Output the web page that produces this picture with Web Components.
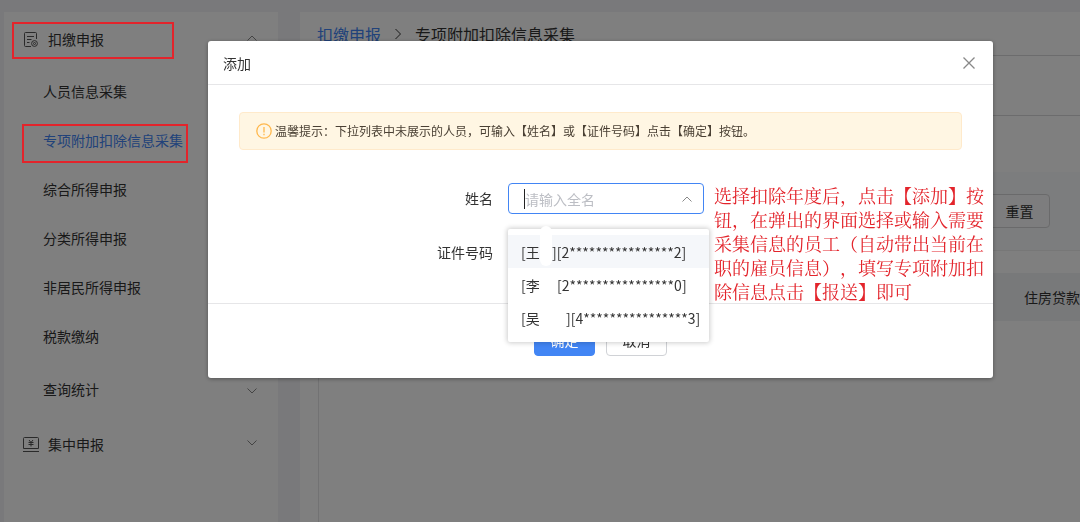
<!DOCTYPE html>
<html lang="zh-CN">
<head>
<meta charset="utf-8">
<title>专项附加扣除信息采集</title>
<style>
html,body{margin:0;height:100%}
body{font-family:"Noto Sans CJK SC",sans-serif;font-size:14px;line-height:20px;color:#333;background:#f3f3f7;overflow:hidden;
--blue:#4285f4;--line:#e6e6e8;--red:#e3242b}
</style>
</head>
<body>
<tax-app></tax-app>
<script>
const define=(name,html,setup)=>customElements.define(name,class extends HTMLElement{
  connectedCallback(){
    if(this.shadowRoot)return;
    this.attachShadow({mode:"open"}).innerHTML=html;
    if(setup)setup(this,this.shadowRoot);
  }
});

define("line-icon",`<style>:host{display:inline-flex;flex:none}svg{display:block;fill:none;stroke:currentColor}</style><svg aria-hidden="true"></svg>`,(el,root)=>{
  const icons={
    report:[16,17,'<path d="M8 15.500H2.500Q1.500 15.500 1.500 14.500V2.500Q1.500 1.500 2.500 1.500H12.500Q13.500 1.500 13.500 2.500V8M4 5.500H11M4 8.500H8.500M4 11.500H6.500"/><circle cx="11.500" cy="12.500" r="2.900"/><circle cx="11.500" cy="12.500" r="1"/>'],
    money:[18,17,'<path d="M2.500 1.500H15.500Q16.500 1.500 16.500 2.500V12.500H1.500V2.500Q1.500 1.500 2.500 1.500ZM1 15.500H17M7 4L9 6.500L11 4M6.500 6.500H11.500M6.500 8.500H11.500M9 6.500V10.500"/>'],
    up:[12,8,'<path d="M1.500 6.500L6 2L10.500 6.500"/>'],
    down:[12,8,'<path d="M1.500 1.500L6 6L10.500 1.500"/>'],
    right:[8,12,'<path d="M1.500 1L6.500 6L1.500 11"/>'],
    close:[14,14,'<path stroke-width="1.300" d="M1.500 1.500L12.500 12.500M12.500 1.500L1.500 12.500"/>'],
    warn:[16,16,'<circle cx="8" cy="8" r="7.200" stroke-width="1.300"/><path stroke-width="1.300" d="M8 4V9.500M8 10.800V12.200"/>']
  };
  const [w,h,d]=icons[el.getAttribute("name")],svg=root.querySelector("svg");
  svg.setAttribute("width",w);svg.setAttribute("height",h);svg.setAttribute("viewBox",`0 0 ${w} ${h}`);svg.innerHTML=d;
});

define("menu-item",`<style>
:host{display:block}
a{position:relative;display:flex;align-items:center;height:49px;padding:0 20px 0 39px;color:inherit;text-decoration:none}
:host([group]) a{height:54px;padding-left:18px;gap:8px}
:host([sub]) a{height:57px}
:host([active]) a{color:var(--blue)}
.icon{width:18px;display:flex;justify-content:center;color:#555}
:host(:not([group])) .icon{display:none}
.label{flex:1}
.arrow{color:#888}
:host([group]) .arrow{padding-bottom:6px}
.mark{display:none;position:absolute;z-index:20;border:2px solid var(--red);box-sizing:border-box;pointer-events:none}
:host([marked]) .mark{display:block;left:18px;right:90px;top:9px;bottom:1px}
:host([marked][group]) .mark{left:8px;right:104px;top:10px;bottom:7px}
</style><a href="#"><span class="icon"><slot name="icon"></slot></span><span class="label"><slot></slot></span><span class="arrow"><slot name="arrow"></slot></span><span class="mark"></span></a>`);

define("side-menu",`<style>
:host{display:block;width:274px;flex:none;background:#fff}
</style><nav aria-label="主菜单">
<menu-item group marked><line-icon slot="icon" name="report"></line-icon>扣缴申报<line-icon slot="arrow" name="up"></line-icon></menu-item>
<menu-item>人员信息采集</menu-item>
<menu-item active marked>专项附加扣除信息采集</menu-item>
<menu-item>综合所得申报</menu-item>
<menu-item>分类所得申报</menu-item>
<menu-item>非居民所得申报</menu-item>
<menu-item>税款缴纳</menu-item>
<menu-item sub>查询统计<line-icon slot="arrow" name="down"></line-icon></menu-item>
<menu-item group><line-icon slot="icon" name="money"></line-icon>集中申报<line-icon slot="arrow" name="down"></line-icon></menu-item>
</nav>`);

define("page-content",`<style>
:host{display:flex;flex-direction:column;flex:1;min-width:0;background:#fff}
.crumbs{display:flex;align-items:center;gap:13px;height:43px;padding-left:17px;font-size:16px;border-bottom:1px solid #d8d8da}
.crumbs a{color:var(--blue);text-decoration:none}
.tabs{height:59px;border-bottom:1px solid #d8d8da}
.filter{margin:56px 0 0 18px;padding:22px 30px;display:flex;justify-content:flex-end;background:#f9fafc;border-bottom:1px solid #eee}
button{font:inherit;color:inherit;width:61px;height:34px;padding:0;border:1px solid #d4d4d6;border-radius:4px;background:#fbfbfc}
.list{flex:1;display:flex;margin:22px 0 0 18px;border-left:1px solid #e4e4e6}
table{width:100%;height:48px;border-collapse:collapse}
th{padding:0;text-align:right;font-weight:400;background:#f1f2f5;white-space:nowrap}
</style>
<nav class="crumbs" aria-label="面包屑"><a href="#">扣缴申报</a><line-icon name="right"></line-icon><span>专项附加扣除信息采集</span></nav>
<div class="tabs"></div>
<div class="filter"><button type="button">重置</button></div>
<div class="list"><table><thead><tr><th scope="col">住房贷款</th></tr></thead></table></div>`);

define("notice-bar",`<style>
:host{display:flex;align-items:center;gap:3px;height:36px;padding:0 16px;border:1px solid #ffeacb;border-radius:4px;background:#fff6e3;font-size:12px;color:#4a4034}
line-icon{color:#ffb84d}
</style><line-icon name="warn"></line-icon><span><slot></slot></span>`);

define("person-picker",`<style>
:host{display:block;position:relative}
.box{display:flex;align-items:center;height:29px;padding:0 10px 0 15px;border:1px solid var(--blue);border-radius:4px;background:#fff}
input{flex:1;min-width:0;height:20px;padding:0;border:0;border-left:1px solid #222;outline:0;background:none;font:inherit;color:inherit}
input::placeholder{color:#bcbec4;opacity:1}
line-icon{color:#888}
ul{position:absolute;z-index:2;top:46px;left:0;width:201px;margin:0;padding:6px 0 8px;list-style:none;background:#fff;border-radius:2px;box-shadow:0 0 5px 1px rgba(0,0,0,.2);box-sizing:border-box}
ul::before{content:"";position:absolute;top:-3px;left:32px;width:12px;height:40px;border-radius:6px;background:#fff}
li{display:flex;height:33px;align-items:center;padding-left:13px;white-space:pre}
li:first-child{background:#f5f7fa}
.name{width:36px}
.name.open{width:31px}
.wide{width:45px}
</style>
<div class="box"><input id="name" type="text" role="combobox" aria-expanded="true" aria-controls="people" aria-label="姓名" placeholder="请输入全名"><line-icon name="up"></line-icon></div>
<ul id="people" role="listbox">
<li role="option" aria-selected="true"><span class="name open">[王</span><span>][2****************2]</span></li>
<li role="option"><span class="name">[李</span><span>[2****************0]</span></li>
<li role="option"><span class="wide">[吴</span><span>][4****************3]</span></li>
</ul>`);

define("add-dialog",`<style>
:host{display:block;margin:41px 87px 0 208px;background:#fff;border-radius:3px;box-shadow:0 1px 4px rgba(0,0,0,.35)}
header{display:flex;justify-content:space-between;align-items:center;height:43px;padding:0 17px 0 15px;border-bottom:1px solid var(--line)}
.close{display:flex;padding:0;border:0;background:none;color:#888}
h2{margin:0;font:inherit}
.body{padding:27px 31px 0}
.form{display:grid;grid-template-columns:269px 196px minmax(0,1fr);grid-template-rows:31px 23px 31px;align-items:center;margin:33px -24px 0 0;height:120px;align-content:start}
label{padding:0 15px 2px 0;text-align:right;grid-column:1}
.second{grid-row:3}
person-picker{grid-column:2;grid-row:1}
.tip{grid-column:3;grid-row:1 / 4;align-self:start;margin:0;padding-left:10px;font-family:"Noto Serif CJK SC","Noto Sans CJK SC",serif;font-size:18px;line-height:24px;text-spacing-trim:space-all;color:var(--red)}
footer{display:flex;justify-content:center;gap:11px;height:32px;padding:20px 0 22px;border-top:1px solid var(--line)}
footer button{width:61px;font:inherit;border:1px solid #d0d2d6;border-radius:4px;background:#fff;color:inherit;padding:0}
footer .ok{background:var(--blue);border-color:var(--blue);color:#fff}
</style>
<header><h2>添加</h2><button class="close" type="button" aria-label="关闭"><line-icon name="close"></line-icon></button></header>
<div class="body">
<notice-bar>温馨提示：下拉列表中未展示的人员，可输入【姓名】或【证件号码】点击【确定】按钮。</notice-bar>
<div class="form">
<label>姓名</label><person-picker></person-picker>
<p class="tip">选择扣除年度后，点击【添加】按钮，在弹出的界面选择或输入需要采集信息的员工（自动带出当前在职的雇员信息），填写专项附加扣除信息点击【报送】即可</p>
<label class="second">证件号码</label>
</div>
</div>
<footer><button class="ok" type="button">确定</button><button type="button">取消</button></footer>`,(el,root)=>{
  el.setAttribute("role","dialog");el.setAttribute("aria-label","添加");
  root.querySelector("label").addEventListener("click",()=>root.querySelector("person-picker").shadowRoot.querySelector("input").focus());
});

define("tax-app",`<style>
:host{display:block;height:100%}
.page{display:flex;gap:22px;box-sizing:border-box;height:100vh;padding:12px 0 0 4px}
.mask{position:fixed;inset:0;z-index:5;background:rgba(0,0,0,.5);display:flow-root}
</style>
<div class="page"><side-menu></side-menu><page-content></page-content></div>
<div class="mask"><add-dialog></add-dialog></div>`);
</script>
</body>
</html>
